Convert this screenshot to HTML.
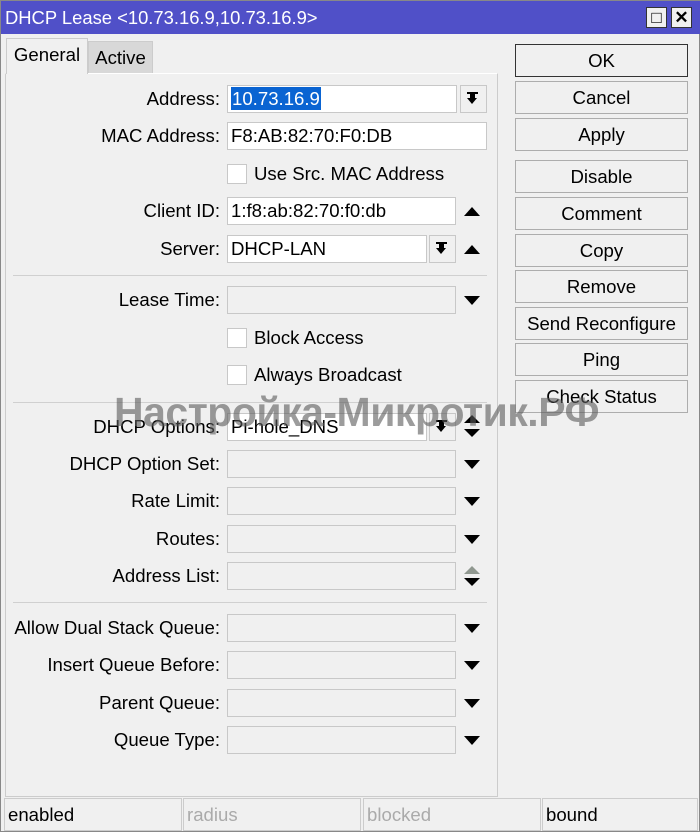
<!DOCTYPE html>
<html><head><meta charset="utf-8"><style>
*{box-sizing:border-box;margin:0;padding:0}
body{width:700px;height:832px;background:#f0f0f0;font-family:"Liberation Sans",Arial,sans-serif;font-size:18.6px;color:#000;position:relative;overflow:hidden;border:1px solid #888}
.a{position:absolute}
.title{left:0;top:0;width:700px;height:33px;background:#5050c8;color:#fff;font-size:18.4px;line-height:33px;padding-left:4px}
.wb{top:6px;width:21px;height:21px;background:#f0f0f0;border:1px solid #333;color:#000;text-align:center;line-height:19px;font-weight:bold;font-size:17px}
.panel{left:4px;top:72px;width:493px;height:724px;border:1px solid #ccc;border-top:1px solid #fff}
.tab{height:33px;line-height:32px;text-align:center}
.btn{left:514px;width:173px;height:33px;border:1px solid #adadad;background:#f0f0f0;text-align:center;line-height:31px}
.lbl{left:-10px;width:229px;text-align:right;line-height:28px;white-space:nowrap}
.in{height:28px;border:1px solid #c8c8c8;background:#f0f0f0;line-height:26px;padding-left:3px;white-space:nowrap}
.w{background:#fff}
.sep{left:12px;width:474px;height:1px;background:#d0d0d0}
.dn{width:0;height:0;border-left:8px solid transparent;border-right:8px solid transparent;border-top:9px solid #000}
.up{width:0;height:0;border-left:8px solid transparent;border-right:8px solid transparent;border-bottom:9px solid #000}
.dd{width:27px;height:28px;border:1px solid #c8c8c8;background:#f0f0f0}
.cb{width:20px;height:20px;border:1px solid #c8c8c8;background:#fff}
.st{top:797px;height:33px;border:1px solid #ccc;line-height:31px;padding-left:3px}
</style></head><body>
<div class="a title">DHCP Lease &lt;10.73.16.9,10.73.16.9&gt;</div>
<div class="a wb" style="left:645px">&#9633;</div>
<div class="a wb" style="left:670px">✕</div>

<div class="a tab" style="left:87px;top:40px;width:65px;background:#d8d8d8;border:1px solid #ccc">Active</div>
<div class="a panel"></div>
<div class="a tab" style="left:5px;top:37px;width:82px;height:36px;background:#f0f0f0;border:1px solid #ccc;border-bottom:none">General</div>

<div class="a btn" style="top:43px;border-color:#333">OK</div>
<div class="a btn" style="top:80px">Cancel</div>
<div class="a btn" style="top:117px">Apply</div>
<div class="a btn" style="top:159px">Disable</div>
<div class="a btn" style="top:196px">Comment</div>
<div class="a btn" style="top:233px">Copy</div>
<div class="a btn" style="top:269px">Remove</div>
<div class="a btn" style="top:306px">Send Reconfigure</div>
<div class="a btn" style="top:342px">Ping</div>
<div class="a btn" style="top:379px">Check Status</div>

<div class="a lbl" style="top:84px">Address:</div>
<div class="a in w" style="left:226px;top:84px;width:230px"><span style="background:#0a64d2;color:#fff;padding:1px 1px">10.73.16.9</span></div>
<div class="a dd" style="left:459px;top:84px"></div>
<div class="a" style="left:466px;top:91px;width:11px;height:2px;background:#000"></div>
<div class="a" style="left:469px;top:93px;width:5px;height:4px;background:#000"></div>
<div class="a" style="left:466px;top:97px;border-left:5.5px solid transparent;border-right:5.5px solid transparent;border-top:6px solid #000"></div>

<div class="a lbl" style="top:121px">MAC Address:</div>
<div class="a in w" style="left:226px;top:121px;width:260px">F8:AB:82:70:F0:DB</div>

<div class="a cb" style="left:226px;top:163px"></div>
<div class="a" style="left:253px;top:159px;line-height:28px">Use Src. MAC Address</div>

<div class="a lbl" style="top:196px">Client ID:</div>
<div class="a in w" style="left:226px;top:196px;width:229px">1:f8:ab:82:70:f0:db</div>
<div class="a up" style="left:463px;top:206px"></div>

<div class="a lbl" style="top:234px">Server:</div>
<div class="a in w" style="left:226px;top:234px;width:200px">DHCP-LAN</div>
<div class="a dd" style="left:428px;top:234px"></div>
<div class="a" style="left:435px;top:241px;width:11px;height:2px;background:#000"></div>
<div class="a" style="left:438px;top:243px;width:5px;height:4px;background:#000"></div>
<div class="a" style="left:435px;top:247px;border-left:5.5px solid transparent;border-right:5.5px solid transparent;border-top:6px solid #000"></div>
<div class="a up" style="left:463px;top:244px"></div>

<div class="a sep" style="top:274px"></div>

<div class="a lbl" style="top:285px">Lease Time:</div>
<div class="a in" style="left:226px;top:285px;width:229px"></div>
<div class="a dn" style="left:463px;top:295px"></div>

<div class="a cb" style="left:226px;top:327px"></div>
<div class="a" style="left:253px;top:323px;line-height:28px">Block Access</div>
<div class="a cb" style="left:226px;top:364px"></div>
<div class="a" style="left:253px;top:360px;line-height:28px">Always Broadcast</div>

<div class="a sep" style="top:401px"></div>

<div class="a lbl" style="top:412px">DHCP Options:</div>
<div class="a in w" style="left:226px;top:412px;width:200px">Pi-hole_DNS</div>
<div class="a dd" style="left:428px;top:412px"></div>
<div class="a" style="left:435px;top:419px;width:11px;height:2px;background:#000"></div>
<div class="a" style="left:438px;top:421px;width:5px;height:4px;background:#000"></div>
<div class="a" style="left:435px;top:425px;border-left:5.5px solid transparent;border-right:5.5px solid transparent;border-top:6px solid #000"></div>
<div class="a up" style="left:463px;top:414px;border-bottom-width:8px"></div>
<div class="a dn" style="left:463px;top:428px;border-top-width:8px"></div>

<div class="a lbl" style="top:449px">DHCP Option Set:</div>
<div class="a in" style="left:226px;top:449px;width:229px"></div>
<div class="a dn" style="left:463px;top:459px"></div>

<div class="a lbl" style="top:486px">Rate Limit:</div>
<div class="a in" style="left:226px;top:486px;width:229px"></div>
<div class="a dn" style="left:463px;top:496px"></div>

<div class="a lbl" style="top:524px">Routes:</div>
<div class="a in" style="left:226px;top:524px;width:229px"></div>
<div class="a dn" style="left:463px;top:534px"></div>

<div class="a lbl" style="top:561px">Address List:</div>
<div class="a in" style="left:226px;top:561px;width:229px"></div>
<div class="a up" style="left:463px;top:565px;border-bottom:8px solid #909890"></div>
<div class="a dn" style="left:463px;top:577px;border-top-width:8px"></div>

<div class="a sep" style="top:601px"></div>

<div class="a lbl" style="top:613px">Allow Dual Stack Queue:</div>
<div class="a in" style="left:226px;top:613px;width:229px"></div>
<div class="a dn" style="left:463px;top:623px"></div>

<div class="a lbl" style="top:650px">Insert Queue Before:</div>
<div class="a in" style="left:226px;top:650px;width:229px"></div>
<div class="a dn" style="left:463px;top:660px"></div>

<div class="a lbl" style="top:688px">Parent Queue:</div>
<div class="a in" style="left:226px;top:688px;width:229px"></div>
<div class="a dn" style="left:463px;top:698px"></div>

<div class="a lbl" style="top:725px">Queue Type:</div>
<div class="a in" style="left:226px;top:725px;width:229px"></div>
<div class="a dn" style="left:463px;top:735px"></div>

<div class="a" style="left:113px;top:386px;font-size:41px;font-weight:bold;color:rgba(90,90,90,0.6);line-height:50px;white-space:nowrap;letter-spacing:-0.5px">Настройка-Микротик.РФ</div>

<div class="a st" style="left:3px;width:178px">enabled</div>
<div class="a st" style="left:182px;width:178px;color:#aaa">radius</div>
<div class="a st" style="left:362px;width:178px;color:#aaa">blocked</div>
<div class="a st" style="left:541px;width:156px">bound</div>
</body></html>
